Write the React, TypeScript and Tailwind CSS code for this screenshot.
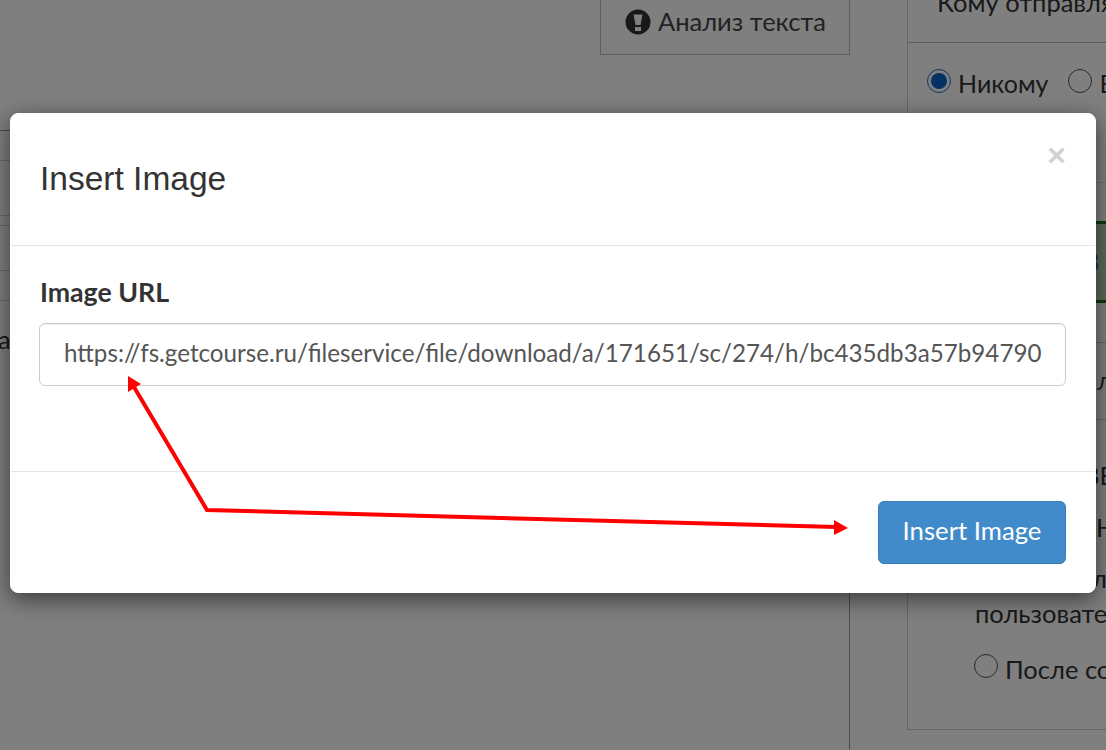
import React from "react"

const url = "https://fs.getcourse.ru/fileservice/file/download/a/171651/sc/274/h/bc435db3a57b94790"

function Radio({ checked }: { checked?: boolean }) {
  return (
    <span className={`flex h-6 w-6 shrink-0 items-center justify-center rounded-full border ${checked ? "border-[#1a6fd0]" : "border-[#555]"}`}>
      {checked && <span className="h-4 w-4 rounded-full bg-[#0a63c9]" />}
    </span>
  )
}

function AlertIcon() {
  return (
    <svg width="26" height="26" viewBox="0 0 26 26" className="shrink-0">
      <path
        fillRule="evenodd"
        fill="#333"
        d="M13 .5a12.5 12.5 0 1 0 0 25a12.5 12.5 0 0 0 0-25ZM8.5 5.5h9l-2 10.5h-5ZM10 18h6v4h-6Z"
      />
    </svg>
  )
}

function Background() {
  return (
    <div className="flex h-full text-[25.5px] leading-none text-[#333]">
      <div className="flex w-[850px] shrink-0 flex-col">
        <div className="flex justify-end">
          <div className="flex h-[55px] w-[250px] items-center gap-[7px] border-x border-b border-[#bbb] pb-[11px] pl-[24px] pr-2 text-[#444]">
            <AlertIcon />
            <span>Анализ текста</span>
          </div>
        </div>
        <div className="mt-[75px] flex-1 border-r border-t border-[#999]">
          <div className="mt-[29px] border-t border-[#ccc]" />
          <div className="mt-[54px] border-t border-[#ccc]" />
          <div className="mt-[9px] border-t border-[#ccc]" />
          <div className="mt-[44px] border-t border-[#ccc]" />
          <div className="mt-[29px] border-t border-[#ccc]" />
          <p className="mt-[26px] -ml-[2px] h-6">а</p>
        </div>
      </div>
      <div className="ml-[57px] flex h-[730px] flex-1 flex-col overflow-hidden border-b border-l border-[#ccc]">
        <div className="h-[43px] shrink-0 overflow-hidden whitespace-nowrap border-b border-[#bbb] pl-[29px]">
          <p className="-mt-[10px]">Кому отправлять</p>
        </div>
        <div className="flex h-[140px] shrink-0 gap-[7px] whitespace-nowrap border-b border-[#ddd] pl-[19px] pt-[26px] text-[25px]">
          <Radio checked />
          <span className="mt-[2px]">Никому</span>
          <span className="ml-[13px]"><Radio /></span>
          <span className="mt-[2px]">Всем</span>
        </div>
        <div className="mt-[38px] flex h-[82px] shrink-0 items-center border-y-[3px] border-[#147814] bg-[#b9d5b9] pl-[175px] text-[#31708f]">
          В
        </div>
        <div className="mt-[39px] flex h-[78px] shrink-0 items-center border-y border-[#ccc] pl-[189px]">
          л
        </div>
        <div className="flex flex-col whitespace-nowrap pl-[67px]">
          <p className="mt-[43px] h-[25px] pl-[108px]">ВЕ</p>
          <p className="mt-[27px] h-[25px] pl-[121px]">Н</p>
          <p className="mt-[26px] h-[25px] pl-[117px]">ло</p>
          <p className="mt-[10px] h-[25px]">пользователе</p>
          <div className="-ml-px mt-[28px] flex gap-[7px]">
            <Radio />
            <span className="mt-[3px]">После сохранения</span>
          </div>
        </div>
      </div>
    </div>
  )
}

export default function App() {
  return (
    <div className="relative h-[750px] w-full overflow-hidden bg-white font-['Lato',sans-serif]">
      <Background />
      <div className="absolute inset-0 bg-black/50" />

      <div className="absolute left-[10px] top-[113px] flex h-[480px] w-[1086px] flex-col rounded-lg border border-white bg-white shadow-[0_6px_22px_rgba(0,0,0,0.55)]">
        <div className="relative h-[132px] shrink-0 border-b border-[#e5e5e5] pl-[29px] pt-[45px]">
          <h4 className="font-['Liberation_Sans',sans-serif] text-[33.5px] leading-[40px] text-[#333]">Insert Image</h4>
          <button className="absolute right-[29px] top-[21px] font-['Liberation_Sans',sans-serif] text-[32px] font-bold leading-[40px] text-[#d2d2d2]">×</button>
        </div>
        <div className="h-[226px] shrink-0 border-b border-[#e5e5e5] pl-[28px] pr-[29px] pt-[31px]">
          <label className="ml-px block text-[26.7px] font-bold leading-[30px] text-[#333]">Image URL</label>
          <input
            readOnly
            value={url}
            className="mt-[16px] block h-[63px] w-full rounded-md border border-[#ccc] pb-[4px] pl-[24px] pr-[22px] text-[24.2px] text-[#555] shadow-[inset_0_1px_1px_rgba(0,0,0,0.075)] outline-none"
          />
        </div>
        <div className="flex flex-1 items-start justify-end px-[29px] pt-[29px]">
          <button className="h-[63px] w-[188px] rounded-md border border-[#357ebd] bg-[#428bca] pb-[4px] text-[25.7px] text-white">Insert Image</button>
        </div>
      </div>

      {/* red arrow annotation drawn on top of the dialog */}
      <svg className="pointer-events-none absolute inset-0" width="1106" height="750" viewBox="0 0 1106 750">
        <polyline points="134,387 207,510 836,527" fill="none" stroke="#ff0000" strokeWidth="4" />
        <polygon points="128,376 128,392 141,384" fill="#ff0000" />
        <polygon points="848,528 834,520 834,535" fill="#ff0000" />
      </svg>
    </div>
  )
}
